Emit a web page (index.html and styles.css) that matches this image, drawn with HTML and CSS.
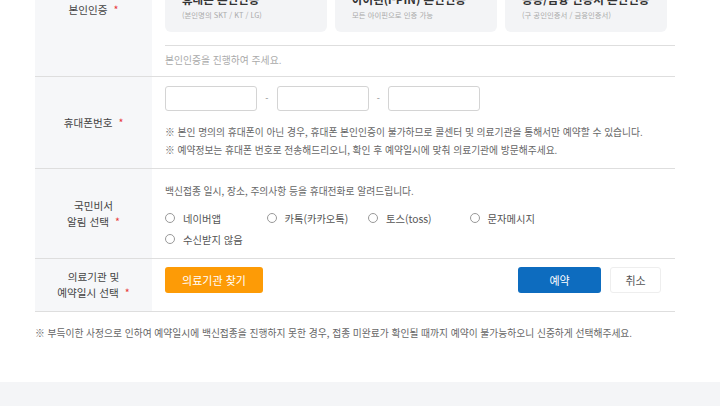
FILE: index.html
```html
<!DOCTYPE html>
<html lang="ko">
<head>
    <meta charset="UTF-8">
    <meta name="viewport" content="width=device-width, initial-scale=1.0">
    <title>백신 접종 예약</title>
    <link rel="stylesheet" href="styles.css">
</head>
<body>
    <div class="page">
        <div class="form">
            <div class="row row-auth">
                <div class="label"><span>본인인증<span class="req">*</span></span></div>
                <div class="field">
                    <div class="auth-cards">
                        <div class="auth-card">
                            <div class="auth-title">휴대폰 본인인증</div>
                            <div class="auth-sub">(본인명의 SKT / KT / LG)</div>
                        </div>
                        <div class="auth-card">
                            <div class="auth-title">아이핀(i-PIN) 본인인증</div>
                            <div class="auth-sub">모든 아이핀으로 인증 가능</div>
                        </div>
                        <div class="auth-card">
                            <div class="auth-title">공동/금융 인증서 본인인증</div>
                            <div class="auth-sub">(구 공인인증서 / 금융인증서)</div>
                        </div>
                    </div>
                    <p class="auth-msg">본인인증을 진행하여 주세요.</p>
                </div>
            </div>

            <div class="row row-phone">
                <div class="label"><span>휴대폰번호<span class="req">*</span></span></div>
                <div class="field">
                    <div class="phone-inputs">
                        <input type="text" class="phone-input" />
                        <span class="dash">-</span>
                        <input type="text" class="phone-input" />
                        <span class="dash">-</span>
                        <input type="text" class="phone-input" />
                    </div>
                    <p class="note">※ 본인 명의의 휴대폰이 아닌 경우, 휴대폰 본인인증이 불가하므로 콜센터 및 의료기관을 통해서만 예약할 수 있습니다.</p>
                    <p class="note">※ 예약정보는 휴대폰 번호로 전송해드리오니, 확인 후 예약일시에 맞춰 의료기관에 방문해주세요.</p>
                </div>
            </div>

            <div class="row row-notice">
                <div class="label"><span>국민비서<br>알림 선택<span class="req">*</span></span></div>
                <div class="field">
                    <p class="desc">백신접종 일시, 장소, 주의사항 등을 휴대전화로 알려드립니다.</p>
                    <div class="radios">
                        <label class="radio"><span class="circle"></span>네이버앱</label>
                        <label class="radio"><span class="circle"></span>카톡(카카오톡)</label>
                        <label class="radio"><span class="circle"></span>토스(toss)</label>
                        <label class="radio"><span class="circle"></span>문자메시지</label>
                        <label class="radio"><span class="circle"></span>수신받지 않음</label>
                    </div>
                </div>
            </div>

            <div class="row row-hospital">
                <div class="label"><span>의료기관 및<br>예약일시 선택<span class="req">*</span></span></div>
                <div class="field">
                    <button class="btn btn-find">의료기관 찾기</button>
                    <div class="actions">
                        <button class="btn btn-submit">예약</button>
                        <button class="btn btn-cancel">취소</button>
                    </div>
                </div>
            </div>
        </div>
        <p class="foot-note">※ 부득이한 사정으로 인하여 예약일시에 백신접종을 진행하지 못한 경우, 접종 미완료가 확인될 때까지 예약이 불가능하오니 신중하게 선택해주세요.</p>
    </div>
    <div class="footer"></div>
</body>
</html>
```

FILE: styles.css
```css
body {
    font-family: "Noto Sans CJK KR", "Noto Sans", sans-serif;
    margin: 0;
    padding: 0;
    background-color: #fff;
    color: #555;
}
p {
    margin: 0;
}
.page {
    width: 640px;
    margin: -56px 0 0 35px;
}
.row {
    display: flex;
    border-bottom: 1px solid #dedede;
}
.label {
    width: 117px;
    flex-shrink: 0;
    background-color: #f6f7f9;
    display: flex;
    align-items: center;
    justify-content: center;
    text-align: center;
    font-size: 10.6px;
    line-height: 16px;
    color: #444;
}
.req {
    color: #e83a3a;
    margin-left: 6px;
}
.field {
    flex: 1;
    padding: 10px 0 9px 13px;
}
.auth-cards {
    display: grid;
    grid-template-columns: repeat(3, 162px);
    gap: 8px;
}
.auth-card {
    height: 78px;
    box-sizing: border-box;
    padding: 0 17px 11px;
    display: flex;
    flex-direction: column;
    justify-content: flex-end;
    background-color: #f3f4f6;
    border-radius: 6px;
}
.auth-title {
    font-size: 11.5px;
    font-weight: bold;
    line-height: 16px;
    color: #333;
    margin-bottom: 2px;
}
.auth-sub {
    font-size: 7.4px;
    line-height: 12px;
    color: #aaa;
}
.auth-msg {
    margin-top: 13px;
    border-top: 1px solid #dedede;
    padding-top: 7px;
    font-size: 9.8px;
    line-height: 14px;
    color: #aaa;
}
.row-phone .field {
    padding-top: 9px;
}
.phone-inputs {
    display: flex;
    align-items: center;
}
.phone-input {
    width: 92px;
    height: 25px;
    box-sizing: border-box;
    border: 1px solid #d4d4d4;
    border-radius: 3px;
    margin: 0;
    padding: 0 6px;
}
.dash {
    width: 19.5px;
    text-align: center;
    font-size: 9px;
    color: #888;
}
.note {
    font-size: 9.75px;
    line-height: 18px;
    color: #666;
}
.phone-inputs + .note {
    margin-top: 12px;
}
.row-notice .field {
    padding: 13px 0 8.5px 13px;
}
.desc {
    font-size: 9.75px;
    line-height: 18px;
    color: #666;
    margin-bottom: 7.5px;
}
.radios {
    display: flex;
    flex-wrap: wrap;
    width: 410px;
}
.radio {
    width: 101.5px;
    display: flex;
    align-items: center;
    font-size: 10.3px;
    line-height: 21px;
    color: #555;
}
.circle {
    width: 8px;
    height: 8px;
    border: 1px solid #999;
    border-radius: 50%;
    margin-right: 8px;
    background-color: #fff;
}
.row-hospital .field {
    display: flex;
    justify-content: space-between;
    align-items: flex-start;
    padding: 8px 14px 18px 13px;
}
.actions {
    display: flex;
    gap: 9px;
}
.btn {
    height: 26px;
    border: none;
    border-radius: 3px;
    font-family: inherit;
    font-size: 11px;
    cursor: pointer;
}
.btn-find {
    width: 98px;
    background-color: #fd9b06;
    color: #fff;
}
.btn-submit {
    width: 83px;
    background-color: #0d6cbf;
    color: #fff;
}
.btn-cancel {
    width: 51px;
    background-color: #fff;
    border: 1px solid #eee;
    color: #555;
}
.foot-note {
    margin-top: 13px;
    font-size: 9.75px;
    line-height: 16px;
    color: #666;
}
.footer {
    margin-top: 41px;
    height: 24px;
    background-color: #f4f5f7;
}
```
